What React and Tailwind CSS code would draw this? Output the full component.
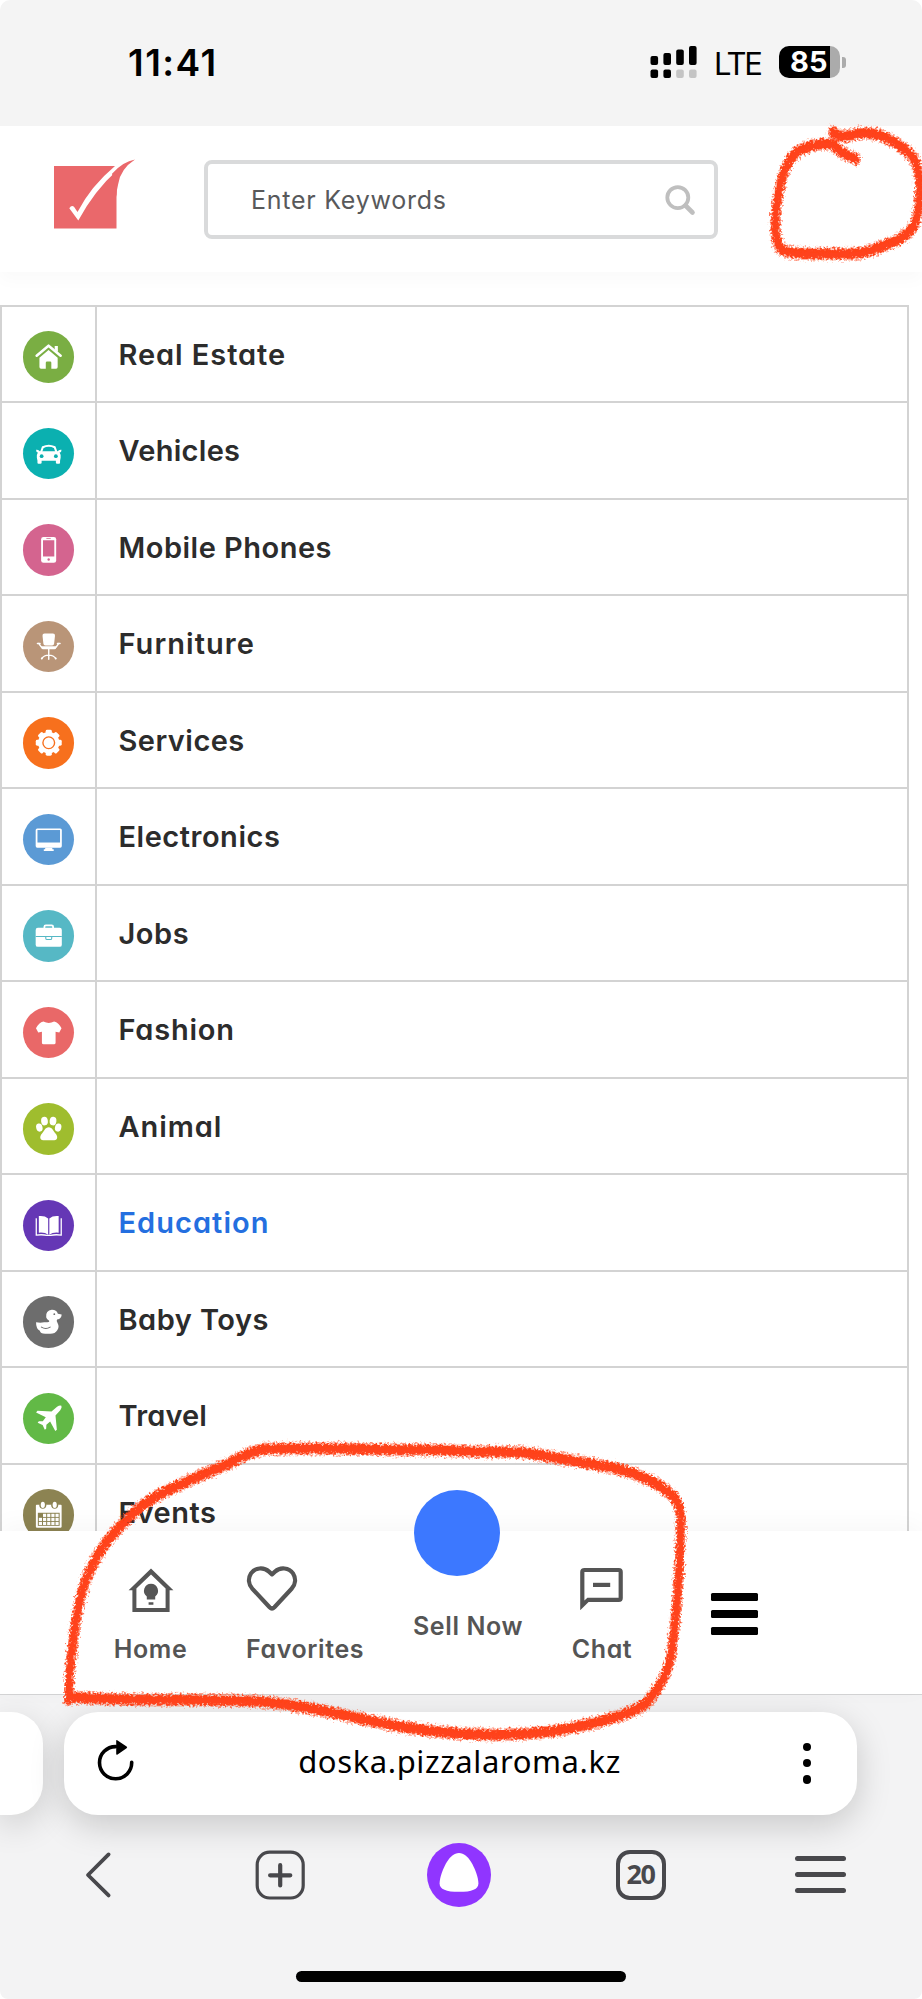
const sans = "font-['Inter','Noto_Sans',sans-serif] [font-feature-settings:'cv11','ss03']";

const House = () => (
  <g>
    <path d="M13.8 25 L25.8 14.8 L38 25" fill="none" stroke="#fff" strokeWidth="2.6" strokeLinecap="round" strokeLinejoin="round" />
    <path d="M32 15.2h3.2v6l-3.2-2.6z" />
    <path d="M16.6 27 L25.8 19.2 L35 27 V36.4 Q35 38 33.4 38 H28.6 V32 Q28.6 30.8 27.4 30.8 H24.3 Q23 30.8 23 32 V38 H18.2 Q16.6 38 16.6 36.4 Z" />
  </g>
);

const Car = () => (
  <g>
    <path d="M18 25 L20 19.4 Q26 16.4 32 19.4 L34 25" fill="none" stroke="#fff" strokeWidth="2.1" />
    <path d="M13.2 22 Q15.6 21.4 17 23.6 H35 Q36.4 21.4 38.9 22 L38.4 24.2 L37 24.8 Q38.4 27 38 30 L37.4 33 V35 Q37.4 36 36.4 36 H34.4 Q33.2 36 33.2 35 V33 H18.8 V35 Q18.8 36 17.6 36 H15.6 Q14.6 36 14.6 35 V33 L14 30 Q13.6 27 15 24.8 L13.7 24.2 Z" />
    <circle cx="18.8" cy="28.4" r="1.9" fill="#0bb0b0" />
    <circle cx="33.2" cy="28.4" r="1.9" fill="#0bb0b0" />
  </g>
);

const Phone = () => (
  <g>
    <rect x="18.3" y="13" width="15.2" height="26.2" rx="2.4" />
    <rect x="20.2" y="16.4" width="11.4" height="16.4" fill="#d4648f" />
    <path d="M23.6 14.6h4.4" stroke="#d4648f" strokeWidth=".8" />
    <circle cx="25.9" cy="35.9" r="1.2" fill="#d4648f" />
  </g>
);

const Chair = () => (
  <g>
    <path d="M21.8 12.6 H30.2 Q32.5 12.6 32.3 15 L31.4 23 Q31.2 24.8 29.4 24.8 H22.6 Q20.8 24.8 20.6 23 L19.7 15 Q19.5 12.6 21.8 12.6Z" />
    <path d="M18.4 25.4 H33.6 V27 Q33.4 28.6 31.6 28.6 H20.4 Q18.6 28.6 18.4 27Z" />
    <path d="M14.6 22.6 H17.2 M15.8 22.6 L18.6 26.4 M37.4 22.6 H34.8 M36.2 22.6 L33.4 26.4" stroke="#fff" strokeWidth="1.5" fill="none" strokeLinecap="round" />
    <path d="M26 28 V38.6 M26 34.4 Q21 34.6 19 37.8 M26 34.4 Q31 34.6 33 37.8" stroke="#fff" strokeWidth="1.4" fill="none" strokeLinecap="round" />
    <circle cx="19" cy="37.9" r="1" /><circle cx="33" cy="37.9" r="1" />
  </g>
);

const Gear = () => (
  <g>
    <circle cx="26" cy="26" r="10.8" />
    {[0, 45, 90, 135].map((a) => (
      <rect key={a} x="22.9" y="12.9" width="6.2" height="26.2" rx="1.5" transform={`rotate(${a} 26 26)`} />
    ))}
    <circle cx="26" cy="26" r="5.9" fill="none" stroke="#f7701d" strokeWidth="1.4" />
  </g>
);

const Monitor = () => (
  <g>
    <rect x="12.8" y="14.6" width="26.4" height="19.4" rx="1.6" />
    <rect x="14.6" y="16.2" width="22.8" height="12.6" fill="#5b9ad5" />
    <path d="M22.4 34h7.2v1.6h1.4v1.8h-10v-1.8h1.4z" />
  </g>
);

const Briefcase = () => (
  <g>
    <path d="M21.6 18.6 V17 Q21.6 15.6 23 15.6 H29 Q30.4 15.6 30.4 17 V18.6" fill="none" stroke="#fff" strokeWidth="1.8" />
    <rect x="12.8" y="18" width="26.4" height="19.2" rx="2.2" />
    <path d="M12.8 26.7 H39.2 M23 27 V28.4 Q23 29.8 24.4 29.8 H27.6 Q29 29.8 29 28.4 V27" fill="none" stroke="#56b8c5" strokeWidth="1.1" />
  </g>
);

const Shirt = () => (
  <path d="M20.6 14.6 Q26 17.6 31.4 14.6 Q36 15.6 38.9 21.4 L36.6 25.8 L32.9 25 V36 Q32.9 37.7 31.2 37.7 H20.8 Q19.1 37.7 19.1 36 V25 L15.4 25.8 L13.1 21.4 Q16 15.6 20.6 14.6Z" />
);

const Paw = () => (
  <g>
    <ellipse cx="16.5" cy="24.8" rx="3.2" ry="4.1" transform="rotate(-14 16.5 24.8)" />
    <ellipse cx="21.7" cy="18.2" rx="3.4" ry="4.4" transform="rotate(-6 21.7 18.2)" />
    <ellipse cx="30.3" cy="18.2" rx="3.4" ry="4.4" transform="rotate(6 30.3 18.2)" />
    <ellipse cx="35.5" cy="24.8" rx="3.2" ry="4.1" transform="rotate(14 35.5 24.8)" />
    <path d="M26 24.6 C29.6 24.6 30.6 28.6 32.8 30.8 C35.4 33.4 35.2 37.6 31.6 37.6 H20.4 C16.8 37.6 16.6 33.4 19.2 30.8 C21.4 28.6 22.4 24.6 26 24.6Z" />
  </g>
);

const Book = () => (
  <g>
    <path d="M25.4 18.6 Q22 15.6 16 16.2 V33 Q22 32.4 25.4 35 Z M26.6 18.6 Q30 15.6 36 16.2 V33 Q30 32.4 26.6 35 Z" />
    <path d="M14 19 H13.4 V35.4 Q20 34.6 24 35.8 H28 Q32 34.6 38.6 35.4 V19 H38" fill="none" stroke="#fff" strokeWidth="1.3" />
  </g>
);

const Duck = () => (
  <g>
    <path d="M23.4 21.4 Q22.8 14.6 29 14 Q33.6 13.8 35.2 17.8 L39 18.6 Q39.2 22.6 34.4 23.8 Q33.4 25.2 35 27.4 Q37 30.8 34.6 34.6 Q32.4 38.2 27.6 38.2 H22.4 Q17.4 38.2 17 35.2 Q13 33 13.2 26.6 Q17.6 27.6 21.4 26.6 Q27.4 26.8 26.4 25 Q24 23.8 23.4 21.4Z" />
    <circle cx="31.6" cy="18.4" r=".9" fill="#6d6d6d" />
    <path d="M18.6 31.4 Q23 34.2 27.4 31.4" fill="none" stroke="#6d6d6d" strokeWidth="1.1" strokeLinecap="round" />
  </g>
);

const Plane = () => (
  <path d="M38.8 12.9 Q39.6 14.6 37.6 17.4 L32.8 22.8 L34.2 37 L32.6 38.4 L27.4 28.8 L23.6 32 L23.4 36 L22 37.2 L19.8 32.2 L14.8 30 L16 28.6 L20 28.6 L23 24.6 L13.2 19.6 L14.6 18 L28.8 18.8 L34.4 14 Q37.2 12 38.8 12.9Z" />
);

const Calendar = () => (
  <g>
    <rect x="13" y="16" width="26" height="23" rx=".8" />
    <circle cx="20" cy="16.4" r="3.5" fill="#8c8352" />
    <circle cx="32" cy="16.4" r="3.5" fill="#8c8352" />
    <ellipse cx="20" cy="16" rx="2.1" ry="3.2" /><ellipse cx="32" cy="16" rx="2.1" ry="3.2" />
    <rect x="15" y="24" width="22" height="13.2" fill="#8c8352" />
    {[0, 1, 2].map((r) =>
      [0, 1, 2, 3, 4].map((c) =>
        r === 0 && c === 0 ? null : <rect key={`${r}${c}`} x={16 + c * 4.2} y={25 + r * 4.1} width="3.2" height="3.2" />
      )
    )}
  </g>
);

const categories = [
  { label: "Real Estate", Icon: House, color: "bg-[#7aae43]", tracking: "tracking-[0.032em]" },
  { label: "Vehicles", Icon: Car, color: "bg-[#0bb0b0]", tracking: "tracking-[0.01em]" },
  { label: "Mobile Phones", Icon: Phone, color: "bg-[#d4648f]", tracking: "tracking-[0.017em]" },
  { label: "Furniture", Icon: Chair, color: "bg-[#b99578]", tracking: "tracking-[0.036em]" },
  { label: "Services", Icon: Gear, color: "bg-[#f7701d]", tracking: "tracking-[0.016em]" },
  { label: "Electronics", Icon: Monitor, color: "bg-[#5b9ad5]", tracking: "tracking-[0.018em]" },
  { label: "Jobs", Icon: Briefcase, color: "bg-[#56b8c5]", tracking: "tracking-[0.018em]" },
  { label: "Fashion", Icon: Shirt, color: "bg-[#e96868]", tracking: "tracking-[0.026em]" },
  { label: "Animal", Icon: Paw, color: "bg-[#9fbd2e]", tracking: "tracking-[0.032em]" },
  { label: "Education", Icon: Book, color: "bg-[#6537b5]", tracking: "tracking-[0.036em]", active: true },
  { label: "Baby Toys", Icon: Duck, color: "bg-[#6d6d6d]", tracking: "tracking-[0.016em]" },
  { label: "Travel", Icon: Plane, color: "bg-[#62b946]", tracking: "tracking-[0.005em]" },
  { label: "Events", Icon: Calendar, color: "bg-[#8c8352]", tracking: "tracking-[0.018em]" },
];

function StatusBar() {
  return (
    <div className="flex h-[126px] items-start rounded-t-[10px] bg-[#f4f4f4] pl-[128px] text-black">
      <div className="mt-[40px] w-[522px] text-[37px] font-semibold leading-[46px] tracking-[1.5px]">11:41</div>
      <svg className="mt-[45px] h-[34px] w-[48px]" viewBox="0 0 48 34">
        <rect x="0.5" y="11" width="7.6" height="9" rx="2" />
        <rect x="13.4" y="8" width="7.6" height="12" rx="2" />
        <rect x="26.2" y="4.5" width="7.6" height="15.5" rx="2" />
        <rect x="39" y="1" width="7.6" height="19" rx="2" />
        <rect x="0.5" y="24.6" width="7.6" height="8.4" rx="2" />
        <rect x="13.4" y="24.6" width="7.6" height="8.4" rx="2" />
        <rect x="26.2" y="24.6" width="7.6" height="8.4" rx="2" fill="#c4c4c4" />
        <rect x="39" y="24.6" width="7.6" height="8.4" rx="2" fill="#c4c4c4" />
      </svg>
      <div className="ml-[16px] mt-[44px] w-[65px] text-[31px] leading-[40px] tracking-[-0.07em]">LTE</div>
      <div className="mt-[46px] flex items-center">
        <div className="flex h-[32px] w-[61px] items-center whitespace-nowrap rounded-[10px] bg-[linear-gradient(90deg,#000_51px,#ababab_51px)] pl-[11px] text-[29px] font-bold leading-[32px] text-white">85</div>
        <div className="ml-[2px] h-[11px] w-[3.5px] rounded-r-[3px] bg-[#ababab]" />
      </div>
    </div>
  );
}

function Header() {
  return (
    <header className="relative z-10 flex h-[146px] items-start bg-white pl-[53px] pt-[31px] shadow-[0_8px_16px_rgba(0,0,0,0.022)]">
      <svg className="mt-px h-[74px] w-[84px]" viewBox="0 0 84 74">
        <rect x="1" y="8" width="62.5" height="62.5" fill="#ea686b" />
        <path d="M16.3 50.3 Q18.5 46.6 21 48.7 L24.5 54 Q38 28 62 8 L64 7.4 V12.6 Q42 32 25.3 62.5 Z" fill="#fff" />
        <path d="M59 15.8 Q70 3.6 82 1.6 Q67.5 11 65.2 26 Q63.7 31 63.5 39 Z" fill="#ea686b" />
      </svg>
      <div className="ml-[67px] mt-[3px] flex h-[79px] w-[514px] items-center justify-between rounded-[8px] border-4 border-[#d9dadb] pl-[43px] pr-[18px]">
        <span className="text-[25px] leading-[32px] tracking-[0.75px] text-[#58595b]">Enter Keywords</span>
        <svg className="mt-px h-[31px] w-[31px]" viewBox="0 0 31 31" fill="none" stroke="#bfbfbf">
          <circle cx="12.8" cy="12.6" r="10.5" strokeWidth="3.8" />
          <path d="M20.5 20.5 L27.5 27.5" strokeWidth="4.6" strokeLinecap="round" />
        </svg>
      </div>
    </header>
  );
}

function CategoryTable() {
  return (
    <main className="h-[1259px] overflow-hidden bg-white pt-[32.5px]">
      <div className="w-[909px] border-x-2 border-t-2 border-[#d3d3d3]">
        {categories.map(({ label, Icon, color, tracking, active }) => (
          <div key={label} className="flex h-[96.53px] border-b-2 border-[#d3d3d3]">
            <div className="flex w-[94.5px] items-center border-r-2 border-[#d3d3d3] pl-[20.5px] pt-[6px]">
              <div className={`h-[51.5px] w-[51.5px] rounded-full ${color}`}>
                <svg className="h-[51.5px] w-[51.5px]" viewBox="0 0 52 52" fill="#fff"><Icon /></svg>
              </div>
            </div>
            <div className={`flex items-center whitespace-nowrap pl-[22px] pt-px text-[29px] font-[560] ${tracking} ${active ? "text-[#246fe0]" : "text-[#2c2c2c]"}`}>
              {label}
            </div>
          </div>
        ))}
      </div>
    </main>
  );
}

function BottomNav() {
  return (
    <nav className="relative flex h-[163px] items-start whitespace-nowrap bg-white pl-[113px] text-[25px] font-semibold leading-[30px] tracking-[0.6px] text-[#555] shadow-[0_-6px_24px_rgba(0,0,0,0.035)]">
      <div className="mt-[36px] flex w-[75px] flex-col items-center">
        <svg className="h-[46px] w-[46px]" viewBox="0 0 46 46">
          <path d="M23 1.5 L45.4 23.2 H41.6 V45 H4.4 V23.2 H0.6 Z M23 7.4 L8.4 21.6 V41 H37.6 V21.6 Z" fill="#555" fillRule="evenodd" />
          <path d="M23 16.8 a7 7 0 0 1 4.2 12.6 V32.6 H18.8 V29.4 A7 7 0 0 1 23 16.8Z M20.6 35.2h4.8v2.6h-4.8z" fill="#555" />
        </svg>
        <div className="mt-[21px]">Home</div>
      </div>
      <div className="ml-[58px] mt-[34px] flex w-[119px] flex-col items-start">
        <svg className="h-[50px] w-[52px]" viewBox="0 0 52 50" fill="none" stroke="#555" strokeWidth="4.2" strokeLinejoin="round">
          <path d="M26 9.4 L23 6.6 C17.6 1.8 9 2.6 5 8.4 C1.8 13.4 2.4 19.4 6.4 23.8 L23.6 42.2 Q26 44.6 28.4 42.2 L45.6 23.8 C49.6 19.4 50.2 13.4 47 8.4 C43 2.6 34.4 1.8 29 6.6 Z" />
        </svg>
        <div className="mt-[19px]">Favorites</div>
      </div>
      <div className="ml-[48px] mt-[80px] w-[110px]">Sell Now</div>
      <div className="absolute -top-[41px] left-[413.5px] h-[86px] w-[86px] rounded-full bg-[#3c78ff]" />
      <div className="ml-[49px] mt-[35px] flex w-[60px] flex-col items-center">
        <svg className="h-[46px] w-[46px]" viewBox="0 0 46 46" fill="#555">
          <path d="M5.6 2 H39.8 Q43.8 2 43.8 6 V32 Q43.8 36 39.8 36 H9.6 L1.2 44.2 V6 Q1.2 2 5.6 2Z M5.4 6 V34.4 L8.4 31.8 H39.6 V6 Z" fillRule="evenodd" />
          <rect x="14" y="16.8" width="17.2" height="4.2" />
        </svg>
        <div className="mt-[22px]">Chat</div>
      </div>
      <div className="ml-[79px] mt-[62px] flex flex-col gap-[9px]">
        <div className="h-[8px] w-[47px] rounded-[1.5px] bg-black" />
        <div className="h-[8px] w-[47px] rounded-[1.5px] bg-black" />
        <div className="h-[8px] w-[47px] rounded-[1.5px] bg-black" />
      </div>
    </nav>
  );
}

function BrowserBar() {
  return (
    <footer className="flex h-[305px] flex-col overflow-hidden rounded-b-[8px] border-t border-[#d4d4d5] bg-[#f3f3f4] pt-[17px]">
      <div className="flex h-[102.5px] gap-[21px]">
        <div className="w-[43px] rounded-r-[32px] bg-white shadow-[0_10px_34px_rgba(0,0,0,0.16)]" />
        <div className="flex w-[793px] items-start justify-between rounded-[34px] bg-white pl-[32px] pr-[45px] shadow-[0_10px_34px_rgba(0,0,0,0.18)]">
          <svg className="mt-[27px] h-[44px] w-[40px]" viewBox="0 0 40 44">
            <path d="M19.6 7.6 A16.1 16.1 0 1 0 35.7 23.4" fill="none" stroke="#000" strokeWidth="3.6" strokeLinecap="round" />
            <path d="M20.2 2 Q20.2 0.6 21.6 1.4 L30.6 7.6 Q31.8 8.4 30.6 9.2 L21.6 15.4 Q20.2 16.2 20.2 14.8 Z" />
          </svg>
          <div className="-ml-[19px] mt-[29px] font-['Noto_Sans',sans-serif] text-[31px] leading-[40px] tracking-[0.6px] text-black">doska.pizzalaroma.kz</div>
          <div className="mt-[30.5px] flex w-[10px] flex-col items-center gap-[8px]">
            <div className="h-[8.4px] w-[8.4px] rounded-full bg-black" />
            <div className="h-[8.4px] w-[8.4px] rounded-full bg-black" />
            <div className="h-[8.4px] w-[8.4px] rounded-full bg-black" />
          </div>
        </div>
      </div>
      <div className="mt-[28px] flex h-[64px] items-center pl-[84px]">
        <svg className="h-[50px] w-[28px]" viewBox="0 0 28 50" fill="none" stroke="#48484c" strokeWidth="3.8" strokeLinecap="round" strokeLinejoin="round">
          <path d="M24.6 4.4 L4 25 L24.6 45.4" />
        </svg>
        <svg className="ml-[143px] h-[50px] w-[50px]" viewBox="0 0 50 50" fill="none" stroke="#48484c" strokeLinecap="round">
          <rect x="2.2" y="2.2" width="46" height="45.8" rx="12.5" strokeWidth="3.2" />
          <path d="M25.2 15.2 V35.4 M15.1 25.3 H35.3" strokeWidth="4.2" />
        </svg>
        <svg className="ml-[122px] h-[64px] w-[64px]" viewBox="0 0 64 64">
          <circle cx="32" cy="32" r="32" fill="#9035ff" />
          <path d="M32 10 C37 10 40.6 13.6 43.8 18.4 C48 25 51.4 34.6 51.4 40.4 C51.4 46.2 45 48.8 32 48.8 C19 48.8 12.6 46.2 12.6 40.4 C12.6 34.6 16 25 20.2 18.4 C23.4 13.6 27 10 32 10Z" fill="#fff" />
        </svg>
        <div className="ml-[125px] flex h-[50px] w-[50px] items-center justify-center rounded-[14px] border-4 border-[#48484c] pb-[2px] pr-px font-['Noto_Sans',sans-serif] text-[27px] font-bold leading-none tracking-[-0.05em] text-[#48484c]">20</div>
        <div className="ml-[129px] flex flex-col gap-[11px]">
          <div className="h-[4.8px] w-[51px] rounded-full bg-[#48484c]" />
          <div className="h-[4.8px] w-[51px] rounded-full bg-[#48484c]" />
          <div className="h-[4.8px] w-[51px] rounded-full bg-[#48484c]" />
        </div>
      </div>
      <div className="ml-[296px] mt-[64px] h-[11px] w-[330px] rounded-full bg-black" />
    </footer>
  );
}

const bigLoop =
  "M68 1699 C68 1670 72 1640 76 1615 C80 1590 87 1570 99 1551 Q112 1532 126 1519 Q142 1502 162 1492 Q200 1474 228 1463 Q249 1450 265 1448 C320 1447 380 1449 430 1449 C470 1451 500 1451 525 1452 C550 1456 590 1463 617 1468 C640 1474 660 1484 673 1496 Q681 1505 680 1525 C679 1570 675 1620 671 1650 C668 1674 656 1690 645 1703 Q625 1716 580 1725 Q545 1734 490 1734 Q430 1733 380 1722 C340 1714 300 1704 262 1701 Q225 1699 170 1699 C130 1699 100 1699 69 1696";
const smallLoop =
  "M855 158 Q838 152 832 143 Q812 142 798 150 C782 161 777 190 775 213 Q773 236 779 247 C784 254 815 253 835 253 C860 254 868 251 882 245 Q905 238 913 225 C919 212 919 200 919 186 Q919 164 910 154 Q895 140 878 134 Q862 130 848 135 Q838 137 832 131";

function Marker() {
  return (
    <svg className="pointer-events-none absolute left-0 top-0 z-20 h-[1999px] w-[922px]" viewBox="0 0 922 1999" fill="none" stroke="#ff431a" strokeLinecap="round" strokeLinejoin="round">
      <filter id="crayon" x="0" y="0" width="922" height="1999" filterUnits="userSpaceOnUse">
        <feTurbulence type="fractalNoise" baseFrequency="0.45" numOctaves="2" seed="4" result="noise" />
        <feDisplacementMap in="SourceGraphic" in2="noise" scale="8" xChannelSelector="R" yChannelSelector="G" />
      </filter>
      <g filter="url(#crayon)" transform="translate(0.8 0.8)">
        {[bigLoop, smallLoop].map((d) => (
          <g key={d}>
            <path d={d} strokeWidth="10" strokeOpacity=".45" transform="translate(0 -1.5)" />
            <path d={d} strokeWidth="10" strokeOpacity=".45" transform="translate(0 1.5)" />
            <path d={d} strokeWidth="6.5" transform="translate(0 -1.5)" />
            <path d={d} strokeWidth="6.5" transform="translate(0 1.5)" />
          </g>
        ))}
      </g>
    </svg>
  );
}

export default function App() {
  return (
    <div className={`relative h-[1999px] w-[922px] overflow-hidden bg-white ${sans}`}>
      <StatusBar />
      <Header />
      <CategoryTable />
      <BottomNav />
      <BrowserBar />
      <Marker />
    </div>
  );
}
